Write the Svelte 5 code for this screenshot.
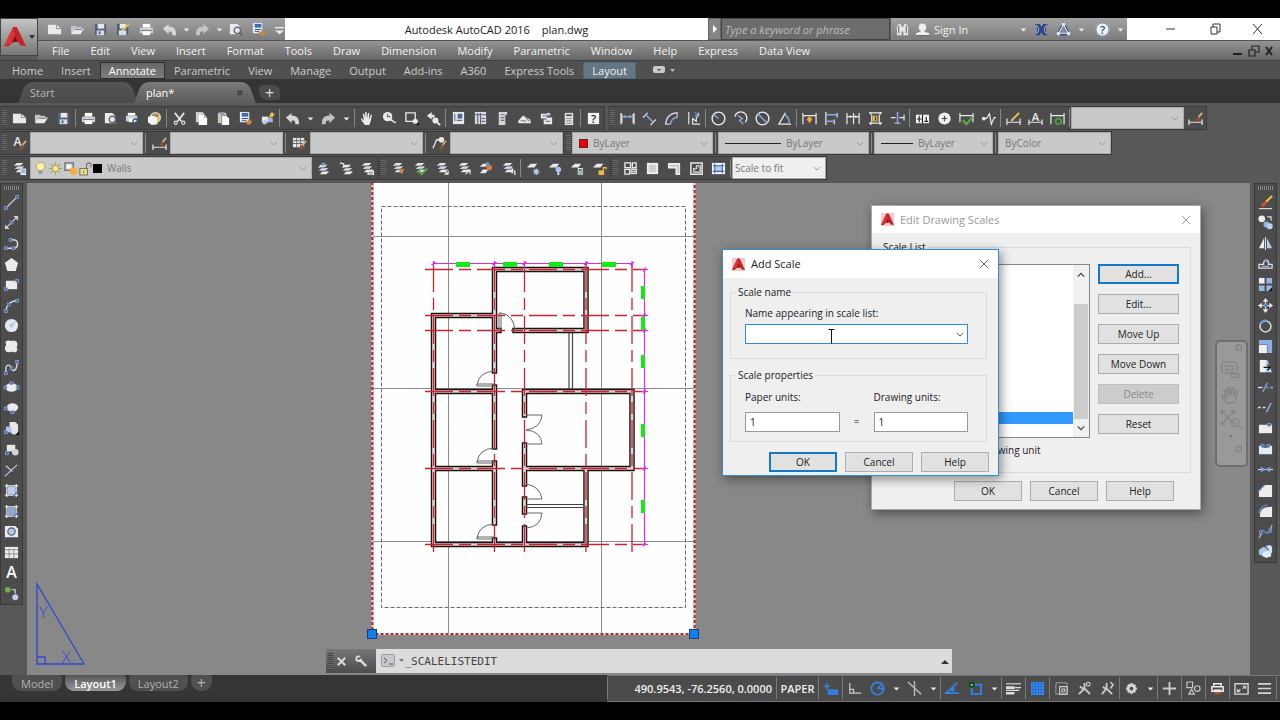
<script lang="ts">
	type Item = { icon: string; label: string; narrow?: boolean };

	const LIGHT = '#e9e9e9';
	const BLUE = '#86a8ea';

	// small helpers for the 16x16 icon set
	const line = (d: string, color = LIGHT, width = 1.3) =>
		`<path d="${d}" fill="none" stroke="${color}" stroke-width="${width}"/>`;
	const fill = (d: string, color = LIGHT) => `<path d="${d}" fill="${color}"/>`;
	const dot = (x: number, y: number, r: number, color = LIGHT) =>
		`<circle cx="${x}" cy="${y}" r="${r}" fill="${color}"/>`;
	const ring = (x: number, y: number, r: number, color = LIGHT, width = 1.5) =>
		`<circle cx="${x}" cy="${y}" r="${r}" fill="none" stroke="${color}" stroke-width="${width}"/>`;
	const node = (x: number, y: number) =>
		`<rect x="${x - 1.5}" y="${y - 1.5}" width="3" height="3" fill="#4a5f94" stroke="${BLUE}" stroke-width=".8"/>`;
	const glyph = (t: string, x: number, y: number, size: number, color = LIGHT) =>
		`<text x="${x}" y="${y}" font-size="${size}" font-weight="600" font-family="Open Sans, sans-serif" text-anchor="middle" fill="${color}">${t}</text>`;

	const sheets =
		fill('M5 2h7l-3 3H2z') + fill('M6 5.500h7l-3 3H3z', '#d5dbe4') + fill('M7 9h7l-3 3H4z') + line('M4 5.300h6M5 8.800h6', '#5c6472', 0.7);
	const sheetOne = fill('M5 3h7l-3 4H1z');
	const brush = line('M15 2l-4 5', '#d8b18c', 1.8) + fill('M11 6l2 2c-1 3-3 4-6 4 2-2 1-4 4-6z', '#8e5038');
	const pencil = line('M14 2L7 9', '#e9b949', 2.2) + fill('M5 11l1-3 2 2z', '#f3e4c0');
	const dimBase = line('M2 3v10M14 3v10');

	const icons: Record<string, string> = {
		new: fill('M1 3h9l5 4v6H1z') + line('M10 3v4h5', '#8a8a8a', 1),
		open: fill('M1 4h5l1 1h5v2H5l-3 5H1z', '#bfc4ca') + fill('M5 7h10l-4 6H1z') + line('M5 8h8', '#75818e', 1),
		save: fill('M2 2h12v12H2z', '#53617c') + fill('M5 2h7v5H5z') + fill('M4 9h8v5H4z', '#d8dde6') + fill('M6 10h2v3H6z', '#53617c'),
		saveas: fill('M1 2h12v12H1z', '#53617c') + fill('M4 2h7v5H4z') + fill('M3 9h8v5H3z', '#d8dde6') + pencil,
		print: fill('M4 2h8v4H4z', '#fff') + fill('M1 6h14v6H1z', '#cdd1d5') + fill('M4 10h8v4H4z', '#fff') + line('M2 9h12', '#6e7780', 1),
		preview: fill('M2 2h8l3 3v8H2z') + ring(10, 9, 3.4, '#5f6b7b', 1.5) + line('M12 11l3 3', '#59636f', 2),
		publish: fill('M3 2h8v3H3z', '#fff') + fill('M1 5h12v6H1z', '#cdd1d5') + fill('M4 8h7v4H4z', '#fff') + ring(11, 11, 2.5, '#3e5577', 1.5) + line('M12 13l3 2', '#3e5577', 1.8),
		globe: dot(9, 7, 6, '#d6d9c4') + fill('M5 4l4-2 0 4-3 2z', '#5fae5a') + fill('M9 2l4 2-1 3-3-1z', '#d9763e') + fill('M10 8l4-1-1 4-3 1z', '#d9c34a') + fill('M1 6l6-1 4 3v6l-6 1-4-3z', '#f2f4f6'),
		undo: fill('M1 7l6-5v3c5 0 8 1 8 9h-4c0-4-1-4-4-4v3z', '#d8d8d8'),
		redo: fill('M15 7L9 2v3c-5 0-8 1-8 9h4c0-4 1-4 4-4v3z', '#c4c4c4'),
		caret: fill('M5 7h6l-3 3z'),
		caretbar: fill('M3 9h10l-5 4z') + line('M3 6h10', LIGHT, 1.5),
		match: fill('M2 1h10v11H2z', '#e8edf5') + fill('M4 2h7v4H4z', '#3c6cb4') + line('M4 8h7M4 10h5', '#3a5682', 1) + fill('M7 11l3 0 2-3 3 4-3 3-2-1z', '#c98a3d'),
		cut: line('M3 2l7 9M13 2L6 11', LIGHT, 1.8) + ring(4, 12.500, 1.7, LIGHT, 1.2) + ring(12, 12.500, 1.7, LIGHT, 1.2),
		copy: fill('M2 1h7l2 2v9H2z', '#c9cdd2') + fill('M5 4h6l3 3v8H5z', '#fff') + line('M11 4v3h3', '#888', 0.8),
		paste: fill('M2 2h9v11H2z', '#cfc8b8') + fill('M4 1h5v3H4z', '#8d97a5') + fill('M6 5h5l3 3v7H6z', '#fff') + line('M6 15V5h5', '#777', 0.8),
		block: fill('M2 6h7v6H2z') + dot(5, 12, 2.5, '#b8c6df') + fill('M8 8l5-1 1 5H8z', '#9eb6df') + line('M10 7l4-4', '#e6b448', 2) + fill('M13 1l1 2 2 0-2 2v2l-2-2-2 1 1-3z', '#f0c85a'),
		pan: fill('M5 15c-1-2-4-5-4-7l1-0 2 2-1-7h1.500l1 5 0-7h1.500l.5 7 1-6h1.500l-.5 7 2-5h1.300c-1 5-1 7-3 11z'),
		zoomrt: dot(6, 6, 5) + line('M6 3v3h3', '#666', 1.2) + line('M9 9l3 2', LIGHT, 2) + line('M12 12h3', LIGHT, 1.5),
		zoomwin: line('M2 2h10v9H2z', LIGHT, 1.4) + dot(12, 11, 2.7) + fill('M13 15h3v-3z', '#111'),
		zoomprev: fill('M1 5l5-4v3h3v3H6v2z') + dot(10, 10, 3.2) + line('M12 12l3 3', LIGHT, 2),
		props: fill('M2 1h12v13H2z') + fill('M7 3h5v5H7z', '#3f6b9e') + line('M4 3v8M6 10h6', '#5f6f84', 1.2),
		center: fill('M2 1h12v13H2z', '#d9dde2') + line('M5 2v12M8 2v12M2 4h12M9 8h4M9 11h4', '#596676', 1.2),
		palettes: fill('M4 1h9v3h-2v11H4z', '#d3d6da') + line('M6 4h4M6 7h4M6 10h4', '#687483', 1.3),
		sheetset: fill('M1 11l5-6 8 4 1 4H2z') + line('M4 10l6 1M7 4l6 7', '#788592', 1.2),
		markup: fill('M2 3h6v5H2zM8 7h6v7H5V9h3z') + fill('M8 2h4v3H8z', '#b9c7e0') + line('M7 11h5M4 5h3', '#5e6a78', 1.1),
		calc: fill('M4 2h9v13H4z', '#e3e3e3') + line('M5.500 4.500h6', '#4f5c6c', 2) + line('M5.500 8h6M5.500 10.500h6M5.500 13h6', '#7d8896', 1),
		help: fill('M2 2h12v12H2z', '#f4f4f4') + glyph('?', 8, 12.500, 12, '#222'),
		style: glyph('A', 6, 11, 13) + `<g transform="translate(0 3)">${brush}</g>`,
		dimstyle: line('M1 9v6M15 9v6M1 12h14') + brush,
		tablestyle: fill('M1 2h12v10H1z', '#e7e7e7') + line('M1 5h12M1 8h12M5 2v10M9 2v10', '#666', 1) + `<g transform="translate(0 3)">${brush}</g>`,
		mleader: line('M1 13l4-9h4', LIGHT, 1.4) + dot(10, 4, 3) + `<g transform="translate(0 3)">${brush}</g>`,
		linear: dimBase + line('M1 2v12M15 2v12') + line('M3 6h10', BLUE, 1.5) + fill('M3 6l3-2v4zM13 6l-3-2v4z', BLUE),
		aligned: line('M1 7l5-5M9 15l6-6') + line('M4 4l8 8', BLUE, 1.5),
		arclen: line('M2 14C2 7 7 2 14 2') + line('M7 14c0-4 3-7 7-7', BLUE, 1.5) + line('M1 14h6M14 1v6', LIGHT, 1),
		ordinate: line('M3 1v13M7 14h8M7 14V8l4 3v-4l3-4', LIGHT, 1.2) + line('M9 1l5 5M14 1L9 6', BLUE, 1),
		radius: ring(8, 8, 6.8) + line('M8 8L3 4', BLUE, 1.5),
		jogged: line('M2 6a6.500 6.500 0 1 1 11 6', LIGHT, 1.5) + line('M5 5l5 3-3 2 4 4', BLUE, 1.5),
		diameter: ring(8, 8, 6.8) + line('M3 3l10 10', BLUE, 1.6),
		angular: line('M15 14H2L9 2', LIGHT, 1.4) + line('M8 4c4 2 5 5 5 9', BLUE, 1.5),
		quickdim: line('M1 2v12M15 2v12M1 5h14') + fill('M8 5l3 4-3 4-3-4z', '#f0a53a'),
		baseline: line('M2 1v14M14 2v5M11 9v5') + line('M3 4h11M3 11h9', BLUE, 1.5),
		continue: line('M1 2v12M8 2v12M14 2v12M1 6h13') + fill('M3 6l2-2v4zM12 6l-2-2v4z'),
		dimspace: line('M1 2h14M1 13h14M3 1v3M13 1v3M3 12v3M13 12v3M4 4v8M12 4v8') + fill('M5 5h5v6H5z', '#e5b23c') + line('M8 6v4', '#333', 1.2),
		dimbreak: line('M1 7h5M10 7h5M15 4v6') + line('M8 1v12M5 13h6', BLUE, 1.6),
		tolerance: fill('M1 4h14v9H1z', '#f6f6f6') + line('M8 4v9M4.500 5v7M2 8.500h5M12 6v5M10 11h4', '#222', 1.2),
		centermark: dot(8, 8, 6.5, '#efefef') + line('M8 5v6M5 8h6', '#444', 1.3),
		inspect: line('M1 2v10M15 2v10M1 5h14') + line('M4 10l4 4 6-7', '#5aa544', 2.5),
		jogline: line('M1 8h5l3-5 2 11 3-7h2') + dot(3, 8, 2),
		dimedit: line('M1 8v7M15 8v7M1 12h14') + pencil,
		dimtext: line('M1 9v6M15 9v6M1 12h14') + glyph('A', 8, 11, 12),
		dimupdate: line('M1 2v12M15 2v12M1 5h14') + ring(9, 11, 3, '#4f9a42', 2),
		layers: sheets + fill('M9 8h6v7H9z', '#dfe9f7') + line('M10 10h4M10 12h4', '#5d7ca8', 1),
		laycur: `<g transform="translate(0 2)">${sheets}</g>` + fill('M6 2h4v3H6z', '#6c9bd6'),
		layprev: `<g transform="translate(2 2)">${sheets}</g>` + line('M2 2l4 1v4', LIGHT, 1.3),
		laystate: sheets + fill('M8 10h7v5H8z', '#f5f5f5') + line('M9 12h5M9 14h5', '#555', 0.8),
		layiso: sheets + fill('M8 10l6-2-2 6z', '#d98435'),
		laymatch: sheets + line('M6 10l3 4 6-6', '#58a545', 2.2),
		layfrz: sheets + line('M14 10v4h-4M14 14l-5-4', LIGHT, 1.2),
		layoff: sheets + line('M9 14l5-4M14 14v-4h-3', LIGHT, 1.2),
		laycolor: fill('M4 3h6l-3 3H1zM4 9h6l-3 4H1z') + dot(11, 7, 3, '#df7b35') + dot(9, 3, 2, '#6a97dd'),
		laywalk: sheets + fill('M11 8h2v5h-2zM14 10h1.500v5H14z', '#e9e9e9'),
		laycold: sheetOne + line('M11 8v7M7.500 11.500h7M8.500 9l5 5M13.500 9l-5 5', '#b8d5ff', 1.2),
		laybulb: sheetOne + dot(11, 9, 3, '#a5c4ff') + fill('M10 12h2v3h-2z'),
		laylock: sheetOne + fill('M8 10h6v5H8z', '#9fb8b5') + line('M9 10V8h4v2', LIGHT, 1.2),
		layunlock: sheetOne + fill('M7 10h6v5H7z', '#e9bb42') + line('M12 10V7h3v2', '#e9bb42', 1.3),
		vports: line('M2 2h6v5H2zM2 9h5v5H2zM10 2h4v5h-4z', LIGHT, 1.4) + fill('M8 8h7v6H8z') + line('M9 10h5M9 12h5', '#555', 0.8),
		vport1: fill('M2 2h12v12H2z', '#f0f0f0') + fill('M4 4h8v8H4z', '#cfcfcf'),
		vportpoly: fill('M1 2h13v13H9V8H1z') + line('M3 5h9v8', '#aaa', 1),
		vportobj: line('M2 2h12v12H2z', LIGHT, 1.6) + line('M5 12V8h3V5h4v7z', LIGHT, 1.2) + ring(9, 9, 2.5, '#9aa4b2', 1),
		vportclip: fill('M1 2h14v12H1z', '#f0f4fa') + fill('M4 5h8v6H4z', '#b9cdeb') + line('M2 5h12M2 11h12M4 3v10M12 3v10', '#3c68a4', 1.2),
		bulb: dot(8, 6, 4.5, '#fff3a6') + ring(8, 6, 4.5, '#a89a50', 0.8) + fill('M6 10h4v4H6z', '#9b9b9b'),
		sun: dot(8, 8, 3.5, '#f6e58c') + ring(8, 8, 3.5, '#8f8648', 0.8) + line('M8 1v3M8 12v3M1 8h3M12 8h3M3 3l2 2M11 11l2 2M3 13l2-2M11 5l2-2', '#a5974d', 1),
		sunvp: line('M2 2h9v8H2z', '#6c7480', 1.4) + fill('M4 4h5v4H4z', '#fff') + dot(11, 11, 4, '#f3b13c'),
		unlock: fill('M2 8h8v7H2z', '#f2df88') + line('M2 8h8v7H2zM6 10v3M9 8V5c0-4 5-4 5 0v2', '#77716a', 1.1),
		binoc: fill('M2 5l2-3h2l1 3h2l1-3h2l2 3v9H9v-4H7v4H2z', '#e8e8e8') + line('M4 4v8M12 4v8', '#555', 1),
		person: dot(8, 5.500, 4, '#efefef') + fill('M6 8h4v2l5 2v2H1v-2l5-2z', '#efefef') + line('M1 14.500h14', '#555', 0.8),
		exchange: fill('M1 2h5l2 3 2-3h5c-3 3-3 9 0 12h-5l-2-3-2 3H1c3-3 3-9 0-12z', '#2c4787') + line('M2 3c4 3 4 7 0 10M14 3c-4 3-4 7 0 10', '#b9c8e8', 1),
		a360: line('M8 2L2 13h12z', '#34528e', 2.8) + line('M8 3L3 12h10z', '#e7eefb', 1.2) + dot(8, 2.500, 2, '#dfe7f6') + dot(2.500, 12.500, 2, '#dfe7f6') + dot(13.500, 12.500, 2, '#dfe7f6'),
		question: dot(8, 8, 7.5, '#eef2fa') + ring(8, 8, 7, '#4a5f92', 0.8) + glyph('?', 8, 12.500, 12, '#20438c'),
		line: line('M2 14L14 2', '#dcdcdc', 1.3) + node(2, 14) + node(14, 2),
		xline: line('M2 14L14 2', '#cfcfcf', 1.3) + fill('M1 15v-5l5 5zM15 1v5l-5-5z', '#cfcfcf') + node(8, 8),
		pline: line('M1 13h9c6 0 6-9 0-9H7', '#dcdcdc', 1.6) + node(2, 13) + node(7, 4) + node(10, 13),
		polygon: fill('M8 1l7 5-2.500 9h-9L1 6z', '#ececec'),
		rect: fill('M2 4h12v9H2z', '#ececec') + node(14, 4) + node(2, 13),
		arc: line('M2 14C2 9 6 3 14 3', '#dcdcdc', 1.5) + node(2, 14) + node(5, 7) + node(14, 3),
		circle: dot(8, 8, 7, '#e4e8f0') + ring(8, 8, 1.5, BLUE, 1) + line('M9 7l3-3', BLUE, 1),
		cloud: fill('M3 2c2-1 3 0 5 0s5-1 6 2-1 4 0 6-1 5-4 4-3 0-5 0-4-1-4-4 2-3 1-5 0-3 1-3z', '#ececec'),
		spline: line('M2 14C1 2 7 5 8 9s6 3 6-7', '#dcdcdc', 1.5) + node(2, 14) + node(14, 2) + node(8, 9),
		ellipse: `<ellipse cx="8" cy="8" rx="6.500" ry="4.500" fill="#ececec"/>` + node(1.5, 8) + node(14.5, 8) + node(8, 3.5),
		ellarc: `<ellipse cx="9" cy="7" rx="6" ry="4.500" fill="#ececec"/>` + node(2, 8) + node(9, 12),
		insert: fill('M6 1h6l3 3v8H6z') + dot(11, 11, 3.5, '#dfe5f0') + fill('M2 6h6v6H2z', '#b7c5e2') + node(2, 12) + fill('M12 15h4v-4z', '#111'),
		make: fill('M3 3h9v7H3z') + dot(12, 11, 3.5, '#d6d6d6') + node(3, 12),
		point: line('M1 14L14 2M2 3l7 6', '#c4c8d0', 1.3) + line('M4 11l6-5', BLUE, 1),
		hatch: fill('M4 4h8v8H4z', '#a9c2ec') + line('M4 8l4-4M4 12l8-8M8 12l4-4', '#e9effa', 1) + line('M3 1v14M13 1v14M1 3h14M1 13h14', LIGHT, 1.3) + line('M10 14l5-5', '#4f78cc', 1.3),
		gradient: fill('M4 4h8v8H4z', '#8ca8da') + line('M3 1v14M13 1v14M1 3h14M1 13h14', LIGHT, 1.3) + line('M10 14l5-5', '#4f78cc', 1.3),
		region: fill('M1 2h11l3 3v9H1z', '#ececec') + ring(8, 8, 3.8, '#4e648c', 1.5) + dot(8, 8, 3, '#b7c8e6'),
		table: fill('M1 2h14v12H1z', '#ececec') + line('M1 5h14M1 9.500h14M5.500 4v10M10.500 4v10', '#8b8b8b', 1),
		text: glyph('A', 8, 14, 17, '#fff'),
		addsel: dot(4, 4, 3, '#6fb046') + dot(12, 12, 3.2, '#b9d0f4') + line('M8 4h4v4', '#ddd', 1.2),
		erase: line('M15 1L8 8', '#efc04a', 2.4) + line('M9 7l-5 5', '#c4532c', 3.4) + line('M1 14.500h14', '#ddd', 1.2),
		copyobj: dot(4, 4, 3.6, '#ececec') + dot(9, 10, 3.2, '#8fb2e8') + dot(12.500, 12, 3.2, '#b7cff5') + line('M10 2h4v4', '#ddd', 1.2),
		mirror: fill('M6.500 2v11H1z', '#ececec') + fill('M9.500 2v11H15z', '#b9cdea') + line('M8 1v14', '#eee', 1),
		offset: line('M1 13h14V9h-4c2-6-6-6-5 0H1z', '#dcdcdc', 1.4) + line('M4 11h8M6.500 7c0-3 4-3 3.500 0', BLUE, 1.3),
		array: fill('M1 1h6v6H1z', '#efefef') + fill('M9 1h6v6H9zM1 9h6v6H1zM9 9h6v6H9z', '#94b6e8') + fill('M11 15h4v-4z', '#111'),
		move: fill('M8 0l3 4H5zM8 16l3-4H5zM0 8l4-3v6zM16 8l-4-3v6z', '#ececec') + line('M8 3v10M3 8h10', '#ddd', 1.2) + node(8, 8),
		rotate: ring(8, 9, 5.8, '#dcdcdc', 1.6) + line('M2 7c1-3 4-5 8-4', '#6e92dc', 2),
		scale: fill('M1 1h14v14H9V7H1z', '#8cafe5') + fill('M1 6h9v9H1z', '#f0f0f0') + line('M1 6h9v9', '#667', 0.8),
		stretch: fill('M2 1h8l5 13H2z', '#b8cdf0') + fill('M2 1h6v13H2z', '#f0f0f0') + line('M6 9h7M10 6l3 3-3 3', '#111', 1.3),
		trim: line('M0 8h5', '#ddd', 1.4) + line('M5 13L10 3', '#86a8ea', 1.4) + line('M9 8h2M13 8h3', '#86a8ea', 1.4),
		extend: line('M0 8h3M5 8h3', '#ddd', 1.4) + line('M9 13l5-10', '#86a8ea', 1.6),
		breakpt: fill('M1 4h14v9H1z', '#ececec') + node(12, 4),
		breakobj: fill('M1 4h4v2h6V4h4v9H1z', '#e4ebf6') + node(5, 4) + node(11, 4),
		join: line('M0 8h16', '#ddd', 1.2) + fill('M3 5l5 3-5 3zM13 5L8 8l5 3z', '#7ea3e6'),
		chamfer: fill('M1 15V9l6-7h8v13z', '#ececec') + line('M0 9l7-7', '#5f84ca', 1.4),
		fillet: fill('M2 15c0-8 3-11 13-11v11z', '#ececec') + line('M1 11c1-6 4-8 9-9', '#5f84ca', 1.5),
		blend: line('M1 15l3-5M15 1l-2 5', '#bbb', 1.3) + line('M3 8c3-5 5 6 10 0', '#5f84ca', 1.6) + node(3, 9) + node(13, 7),
		explode: fill('M1 6l5-3 4 2v5l-5 3-4-2z', '#a9c6ee') + fill('M8 2l5-1 2 2v6l-4 2V5z', '#cfdff5') + fill('M5 9l5-2 4 2v4l-5 2-4-2z', '#e3ebf8'),
		dyninput: fill('M5 9h11v6H5z', '#2f7fe0') + line('M4 2v7M.5 5.500h7', '#3c87e3', 1.4),
		ortho: line('M3 2v11h12M3 9h4v4', '#c9c9c9', 1.3),
		polar: ring(8, 8, 6.5, '#2f85ea', 1.8) + line('M8 8h8M8 8l4-4', '#2f85ea', 1.5),
		isodraft: line('M1 1l14 13M8 0v16', '#b9b9b9', 1.5),
		otrack: line('M15 13H1L13 2', '#2f85ea', 1.8) + fill('M6 7h4v4H6z', '#2f85ea'),
		osnap: line('M4 4h10v10H4z', '#2f85ea', 2) + dot(4, 4, 3.2, '#0e4a1e') + dot(4, 4, 1.2, '#7fd38a'),
		lwt: line('M0 3h16', '#ddd', 1.2) + line('M0 7h9M0 13h9', '#ddd', 2.8) + line('M9 7h7M0 10h14', '#ddd', 1.2),
		transp: fill('M1 1h14v14H1z', '#3b8ff0') + line('M1 3h14M1 6h14M1 9h14M1 12h14M3 1v14M6 1v14M9 1v14M12 1v14', '#2166bd', 0.8),
		selcyc: `<rect x="2" y="2" width="12" height="12" fill="none" stroke="#ccc" stroke-dasharray="2 1"/>` + line('M6 6h8v8H6zM8.500 8.500h3v3h-3z', '#ccc', 1.2),
		annovis: line('M8 2v6l-6 6M8 8l6 6M3 6l5 3', '#c9c9c9', 2) + ring(12, 3.500, 2, '#c9c9c9', 1.2),
		annoauto: line('M7 2v6l-5 6M7 8l6 6M3 6l4 3', '#c9c9c9', 2) + line('M11 1l3 3-3 4', '#c9c9c9', 1.6),
		gear: ring(8, 8, 3.5, '#d3d3d3', 3) + line('M8 2v3M8 11v3M2 8h3M11 8h3M4 4l2 2M10 10l2 2M4 12l2-2M10 6l2-2', '#d3d3d3', 2),
		plus: line('M8 1v14M1 8h14', '#c9c9c9', 2),
		isolate: line('M1 1h6v6H1zM3 14l3-5 3 5z', '#c9c9c9', 1.2) + ring(12, 8, 3, '#c9c9c9', 1.2),
		printer: line('M4 5V3h8v2M2 6h12v5H2z', '#eee', 1.6) + fill('M4 9h8v2H4z', '#eee') + line('M5 13h6', '#d2502e', 2),
		clean: line('M1 3h14v11H1z', '#d3d3d3', 1.5) + fill('M9 5h4v4zM3 12h4l-4-4z', '#d3d3d3') + line('M11 7L9 8M5 10l2-1', '#d3d3d3', 1.4),
		menu: line('M1 3h14M1 8h14M1 13h14', '#d3d3d3', 1.8)
	};

	const toItems = (names: string): Item[] =>
		names.split(' ').map((n) => ({ icon: n, label: n, narrow: n === 'caret' || n === 'caretbar' }));

	const quickAccess = toItems('new open save saveas print undo caret redo caret preview match caretbar');
	const standardBar = [
		'new open save',
		'print preview publish globe',
		'cut copy paste match block',
		'undo caret redo caret',
		'pan zoomrt zoomwin zoomprev',
		'props center palettes sheetset markup calc',
		'help'
	].map(toItems);
	const dimensionBar = [
		'linear aligned arclen ordinate',
		'radius jogged diameter angular',
		'quickdim baseline continue dimspace dimbreak',
		'tolerance centermark inspect jogline',
		'dimedit dimtext dimupdate'
	].map(toItems);
	const layerBar = toItems('laycur layprev laystate');
	const layerTools = ['layiso laymatch layfrz layoff laycolor laywalk', 'laycold laybulb laylock layunlock'].map(toItems);
	const viewportBar = toItems('vports vport1 vportpoly vportobj vportclip');
	const drawBar = toItems(
		'line xline pline polygon rect arc circle cloud spline ellipse ellarc insert make point hatch gradient region table text addsel'
	);
	const modifyBar = toItems(
		'erase copyobj mirror offset array move rotate scale stretch trim extend breakpt breakobj join chamfer fillet blend explode'
	);
	const statusBar = [
		'dyninput',
		'ortho polar caret isodraft caret',
		'otrack osnap caret',
		'lwt',
		'transp',
		'selcyc annovis annoauto',
		'gear caret',
		'plus',
		'isolate',
		'printer',
		'clean menu'
	].map(toItems);

	const menus = ['File', 'Edit', 'View', 'Insert', 'Format', 'Tools', 'Draw', 'Dimension', 'Modify', 'Parametric', 'Window', 'Help', 'Express', 'Data View'];
	const ribbonTabs = ['Home', 'Insert', 'Annotate', 'Parametric', 'View', 'Manage', 'Output', 'Add-ins', 'A360', 'Express Tools', 'Layout'];
	const styleBoxes = ['style', 'dimstyle', 'tablestyle', 'mleader'];
	const listActions = ['Add...', 'Edit...', 'Move Up', 'Move Down', 'Delete', 'Reset'];

	let activeRibbon = $state('Annotate');
	let activeLayout = $state('Layout1');
	let scaleName = $state('');
	let paperUnits = $state('1');
	let drawingUnits = $state('1');
	let command = $state('_SCALELISTEDIT');

	// floor plan geometry, in drawing coordinates
	const gridX = [433.5, 494.5, 524.5, 586, 632];
	const gridY = [269.5, 315.5, 330.5, 391.5, 468.5, 544.5];
	const walls =
		'M494.500 371V269.500H586V330.500H515M494.500 330.500H499M494.500 315.500H433.500V544.500H586V468.500' +
		'M433.500 391.500H494.500M433.500 468.500H494.500M494.500 387V447M494.500 463V523M494.500 540V544' +
		'M524.500 415V391.500H632V468.500H524.500M524.500 445V484M524.500 499V512M524.500 528V544';
	const doors =
		'M499 330V313h2v17M501 313q13 2 14 18M494 384H477v2h17M477 385q2 -13 17 -14M494 461H477v2h17M477 462q2 -13 17 -14' +
		'M494 537H477v2h17M477 538q2 -13 17 -14M526 415h16q-1 13 -16 15q15 1 16 14H526M526 484q14 2 16 15H526M526 513h16q-1 14 -16 15';
	const tagsX = [456, 503, 549, 602];
	const tagsY = [286, 317, 355, 424, 500];
</script>

{#snippet icon(name: string)}
	<svg class="icon" viewBox="0 0 16 16" aria-hidden="true">{@html icons[name]}</svg>
{/snippet}

{#snippet tools(items: Item[])}
	{#each items as item}
		<button class="tool" class:narrow={item.narrow} aria-label={item.label}>{@render icon(item.icon)}</button>
	{/each}
{/snippet}

{#snippet chevron()}
	<svg class="chevron" viewBox="0 0 10 6" aria-hidden="true"><path d="M1 1l4 4 4-4" /></svg>
{/snippet}

{#snippet logo()}
	<svg class="logo" viewBox="0 0 24 24" aria-hidden="true">
		<path d="M0 22L10 1h4l10 21-6-1-3-4-6 1-4 4z" fill="#c3242b" />
		<path d="M10 1l2 9-4 8-8 4z" fill="#dd3337" />
		<path d="M12 11l3 6-6 1z" fill="#7f1318" />
	</svg>
{/snippet}

<div class="screen">
	<header>
		<button class="app-button" aria-label="Application menu">
			{@render logo()}
			<svg class="app-caret" viewBox="0 0 6 4" aria-hidden="true"><path d="M0 0h6L3 4z" /></svg>
		</button>
		<div class="bars">
			<div class="titlebar">
				<div class="quick">{@render tools(quickAccess)}</div>
				<div class="title"><span>Autodesk AutoCAD 2016</span><span>plan.dwg</span></div>
				<button class="search-toggle" aria-label="Search options">
					<svg viewBox="0 0 6 8" aria-hidden="true"><path d="M1 0l4 4-4 4z" fill="#fff" /></svg>
				</button>
				<input class="search" type="text" aria-label="Search" placeholder="Type a keyword or phrase" />
				<div class="account">
					<button class="tool" aria-label="Find">{@render icon('binoc')}</button>
					<button class="sign-in">{@render icon('person')}Sign In</button>
					{@render tools(toItems('caret exchange a360 caret'))}
					<span class="rule"></span>
					{@render tools(toItems('question caret'))}
				</div>
				<div class="window-buttons">
					<button aria-label="Minimize"><svg viewBox="0 0 12 12"><path d="M1 6h9" /></svg></button>
					<button aria-label="Restore"><svg viewBox="0 0 12 12"><path d="M2 4h6v7H2zM4 4V1h7v8H8" /></svg></button>
					<button aria-label="Close"><svg viewBox="0 0 12 12"><path d="M1 1l9 10M10 1L1 11" /></svg></button>
				</div>
			</div>
			<nav class="menubar" aria-label="Menu">
				{#each menus as menu}
					<button>{menu}</button>
				{/each}
				<div class="doc-buttons">
					<svg viewBox="0 0 44 12" aria-hidden="true">
						<path d="M1 9h9" stroke-width="2" />
						<path d="M17 5h6v6h-6zM20 5V1h7v6h-4" stroke-width="1.200" />
						<path d="M34 2l6 8M40 2l-6 8" stroke-width="2" />
					</svg>
				</div>
			</nav>
		</div>
	</header>

	<nav class="ribbon" aria-label="Ribbon">
		{#each ribbonTabs as tab}
			<button class:active={tab === activeRibbon} class:context={tab === 'Layout'} onclick={() => (activeRibbon = tab)}>
				{tab}
			</button>
		{/each}
		<svg class="ribbon-toggle" viewBox="0 0 24 10" aria-hidden="true">
			<rect x="1" y="1" width="12" height="7" rx="2" fill="#c9c9c9" />
			<path d="M5 4h4l-2 2z" fill="#444" />
			<path d="M18 4h5l-2.500 3z" fill="#b5b5b5" />
		</svg>
	</nav>

	<div class="file-tabs">
		<button class="file-tab">Start</button>
		<button class="file-tab current">plan*<span class="close">✖</span></button>
		<button class="add-tab" aria-label="New tab">+</button>
	</div>

	<div class="toolbars">
		<div class="row spaced">
			<div class="toolbar">
				<span class="grip"></span>
				{#each standardBar as group, i}
					{#if i}<span class="rule"></span>{/if}
					{@render tools(group)}
				{/each}
			</div>
			<div class="toolbar">
				<span class="grip"></span>
				{#each dimensionBar as group}
					{@render tools(group)}
					<span class="rule"></span>
				{/each}
				<div class="combo w-style"><select aria-label="Dimension style" disabled></select>{@render chevron()}</div>
				{@render tools(toItems('dimstyle'))}
			</div>
		</div>

		<div class="row">
			<div class="toolbar">
				<span class="grip"></span>
				{#each styleBoxes as name, i}
					{#if i}<span class="rule wide"></span>{/if}
					<button class="tool" aria-label={name}>{@render icon(name)}</button>
					<div class="combo w-style"><select aria-label={name} disabled></select>{@render chevron()}</div>
				{/each}
			</div>
			<div class="toolbar">
				<span class="grip"></span>
				<div class="combo w-color">
					<span class="swatch red"></span>
					<select aria-label="Color" disabled><option>ByLayer</option></select>{@render chevron()}
				</div>
				<span class="rule wide"></span>
				<div class="combo w-linetype">
					<span class="stroke long"></span>
					<select aria-label="Linetype" disabled><option>ByLayer</option></select>{@render chevron()}
				</div>
				<span class="rule wide"></span>
				<div class="combo w-weight">
					<span class="stroke"></span>
					<select aria-label="Lineweight" disabled><option>ByLayer</option></select>{@render chevron()}
				</div>
				<span class="rule wide"></span>
				<div class="combo w-style">
					<select aria-label="Plot style" disabled><option>ByColor</option></select>{@render chevron()}
				</div>
			</div>
		</div>

		<div class="row">
			<div class="toolbar">
				<span class="grip"></span>
				{@render tools(toItems('layers'))}
				<div class="combo w-layer">
					{#each ['bulb', 'sun', 'sunvp', 'unlock'] as name}{@render icon(name)}{/each}
					<span class="swatch"></span>
					<select aria-label="Layer" disabled><option>Walls</option></select>{@render chevron()}
				</div>
				{@render tools(layerBar)}
			</div>
			<div class="toolbar">
				<span class="grip"></span>
				{#each layerTools as group, i}
					{#if i}<span class="rule"></span>{/if}
					{@render tools(group)}
				{/each}
			</div>
			<div class="toolbar">
				<span class="grip"></span>
				{@render tools(viewportBar)}
				<span class="rule"></span>
				<div class="combo w-scale">
					<select aria-label="Viewport scale"><option>Scale to fit</option></select>{@render chevron()}
				</div>
			</div>
		</div>
	</div>

	<main>
		<div class="side"><div class="palette draw"><span class="grip-h"></span>{@render tools(drawBar)}</div></div>

		<div class="canvas">
			<svg class="paper" viewBox="365 183 336 460" aria-label="Floor plan">
				<rect x="372" y="180" width="322.500" height="454" fill="#fefefe" />
				<path d="M448.500 183V633M601.500 183V633M372 236.500H694M372 388.500H694M372 541.500H694" fill="none" stroke="#8a8a94" />
				<path d="M372.500 180V634H694.500V180" fill="none" stroke="#b3282c" stroke-width="2" />
				<path d="M372.500 180V634H694.500V180" fill="none" stroke="#f6eaea" stroke-width="2" stroke-dasharray="2 3" />
				<rect x="381.500" y="206.500" width="304" height="401" fill="none" stroke="#6b6b6b" stroke-dasharray="4 2" />
				<path d={walls} fill="none" stroke="#161616" stroke-width="5.500" stroke-linecap="square" />
				<path d={walls} fill="none" stroke="#ecd2d2" stroke-width="2.700" stroke-linecap="square" />
				<path d="M569 333V389M572.500 333V389M526 504.500H584M526 507.500H584" fill="none" stroke="#444" stroke-width="1.200" />
				<g fill="none" stroke="#cb2230" stroke-width="1.300" stroke-dasharray="28 6 12 6">
					{#each gridY as y}<path d="M425 {y}H646" />{/each}
					{#each gridX as x}<path d="M{x} 264V552" />{/each}
				</g>
				<path d={doors} fill="none" stroke="#666" />
				<g fill="none" stroke="#d82ee0" stroke-width="1.200">
					<path d="M433 263.500H632M644.500 269V545" />
					{#each gridX as x}<path d="M{x} 261v7M{x - 2} 265l4-3" />{/each}
					{#each gridY as y}<path d="M641 {y}h7M643 {y + 2}l3-4" />{/each}
				</g>
				<g fill="#12ec12">
					{#each tagsX as x}<rect {x} y="262" width="14" height="5" />{/each}
					{#each tagsY as y}<rect x="641" {y} width="4" height="13" />{/each}
				</g>
				<g fill="#0c80ee" stroke="#154375">
					<rect x="367.500" y="629.500" width="9" height="9" />
					<rect x="689.500" y="629.500" width="9" height="9" />
				</g>
			</svg>

			<svg class="ucs" viewBox="0 0 50 84" aria-label="UCS icon">
				<path d="M1 2V82H48zM1 75H9V82" fill="none" stroke="#2f48d0" stroke-width="1.300" />
				<text x="3" y="36">Y</text>
				<text x="26" y="81">X</text>
			</svg>

			<div class="navbar">
				<svg viewBox="0 0 32 126" aria-hidden="true">
					<g fill="none" stroke="#858585" stroke-width="1.500">
						<circle cx="24" cy="6" r="3" />
						<path d="M22 34H9q-4 0-4-4v-4q0-4 4-4h8q5 0 5 4v6M10 26h7v5h-7zM16 35h8v4h-8z" />
						<path d="M10 67c-1-3-5-6-5-8l2 0 3 3-2-9 2 0 2 6 0-9h2l1 9 2-8h2l-1 9 3-6h2l-4 13z" />
						<path d="M5 76l15 15M19 76L5 91M5 80v-4h4M15 76h4v4M5 87v4h4" />
						<circle cx="20" cy="89" r="4" />
						<path d="M23 92l4 4" />
						<circle cx="24" cy="118" r="3" />
					</g>
					<path d="M13 103h5l-2.500 3z" fill="#777" />
				</svg>
			</div>

			<section class="dialog edit-scales" aria-label="Edit Drawing Scales">
				<div class="dialog-title">
					{@render logo()}<h2>Edit Drawing Scales</h2>
					<button class="close-button" aria-label="Close"><svg viewBox="0 0 12 12"><path d="M1 1l10 10M11 1L1 11" /></svg></button>
				</div>
				<fieldset>
					<legend>Scale List</legend>
					<div class="list-row">
						<div class="listbox">
							<div class="list-items"><div class="selected"></div></div>
							<div class="scrollbar">
								<svg viewBox="0 0 10 6"><path d="M1 5l4-4 4 4" /></svg>
								<div class="thumb"></div>
								<svg viewBox="0 0 10 6"><path d="M1 1l4 4 4-4" /></svg>
							</div>
						</div>
						<div class="actions">
							{#each listActions as action, i}
								<button class="push" class:default={i === 0} disabled={action === 'Delete'}>{action}</button>
							{/each}
						</div>
					</div>
					<p class="ratio">1 paper unit = 1 drawing unit</p>
				</fieldset>
				<div class="dialog-buttons">
					<button class="push">OK</button>
					<button class="push">Cancel</button>
					<button class="push">Help</button>
				</div>
			</section>

			<section class="dialog add-scale" aria-label="Add Scale">
				<div class="dialog-title">
					{@render logo()}<h2>Add Scale</h2>
					<button class="close-button" aria-label="Close"><svg viewBox="0 0 12 12"><path d="M1 1l10 10M11 1L1 11" /></svg></button>
				</div>
				<fieldset>
					<legend>Scale name</legend>
					<label for="scale-name">Name appearing in scale list:</label>
					<div class="name-box">
						<input id="scale-name" type="text" bind:value={scaleName} />
						{@render chevron()}
						<svg class="ibeam" viewBox="0 0 7 15" aria-hidden="true"><path d="M.5 .5h6M3.500 .5v14" /></svg>
					</div>
				</fieldset>
				<fieldset>
					<legend>Scale properties</legend>
					<div class="units">
						<div class="unit">
							<label for="paper-units">Paper units:</label>
							<input id="paper-units" type="text" bind:value={paperUnits} />
						</div>
						<span class="equals">=</span>
						<div class="unit">
							<label for="drawing-units">Drawing units:</label>
							<input id="drawing-units" type="text" bind:value={drawingUnits} />
						</div>
					</div>
				</fieldset>
				<div class="dialog-buttons">
					<button class="push default">OK</button>
					<button class="push">Cancel</button>
					<button class="push">Help</button>
				</div>
			</section>

			<div class="command">
				<div class="command-tools">
					<span class="grip"></span>
					<button aria-label="Close"><svg viewBox="0 0 16 16"><path d="M4 4l8 8M12 4l-8 8" stroke="#ddd" stroke-width="2" /></svg></button>
					<button aria-label="Customize">
						<svg viewBox="0 0 16 16"><path d="M6 6l7 7" stroke="#ddd" stroke-width="2.500" /><circle cx="5" cy="5" r="2.500" fill="none" stroke="#ddd" stroke-width="2" stroke-dasharray="12 4" /></svg>
					</button>
				</div>
				<svg class="prompt" viewBox="0 0 24 14" aria-hidden="true">
					<rect x=".5" y=".5" width="13" height="12" rx="1" fill="#c5c8cf" stroke="#9a9da5" />
					<path d="M3 4l3 2.500L3 9M8 10h4" fill="none" stroke="#555" />
					<path d="M18 5h5l-2.500 3z" fill="#777" />
				</svg>
				<input type="text" aria-label="Command" bind:value={command} />
				<button class="history" aria-label="Command history"><svg viewBox="0 0 8 5"><path d="M0 5l4-4 4 4z" fill="#333" /></svg></button>
			</div>
		</div>

		<div class="side right"><div class="palette modify"><span class="grip-h"></span>{@render tools(modifyBar)}</div></div>
	</main>

	<footer>
		<div class="layout-tabs">
			{#each ['Model', 'Layout1', 'Layout2'] as tab}
				<button class="layout-tab" class:active={tab === activeLayout} onclick={() => (activeLayout = tab)}>{tab}</button>
			{/each}
			<button class="layout-tab add" aria-label="New layout">+</button>
		</div>
		<div class="status">
			<span class="coords">490.9543, -76.2560, 0.0000</span>
			<button class="space">PAPER</button>
			{#each statusBar as group}
				<div class="status-group">{@render tools(group)}</div>
			{/each}
		</div>
	</footer>
</div>

<style>
	:global(body) {
		margin: 0;
		background: #000;
	}
	.screen {
		box-sizing: border-box;
		min-height: 100vh;
		padding: 18px 0;
		display: flex;
		flex-direction: column;
		overflow: hidden;
		background: #000;
		color: #ddd;
		font-family: 'Open Sans', 'Noto Sans', sans-serif;
		font-size: 11px;
		line-height: 15px;
	}
	.screen :global(*) {
		box-sizing: border-box;
	}
	button,
	input,
	select {
		margin: 0;
		padding: 0;
		border: 0;
		border-radius: 0;
		background: none;
		color: inherit;
		font: inherit;
		outline: none;
	}
	svg {
		display: block;
		flex: none;
	}
	.icon {
		width: 15px;
		height: 15px;
		overflow: visible;
	}
	.tool {
		flex: none;
		display: flex;
		align-items: center;
		justify-content: center;
		width: 22px;
	}
	.tool.narrow {
		width: 14px;
	}

	/* title and menu */
	header {
		display: flex;
		background: linear-gradient(#999, #6a6a6a 60%, #555);
	}
	.app-button {
		display: flex;
		align-items: center;
		justify-content: center;
		gap: 3px;
		width: 38px;
		height: 38px;
		border: 1px solid #444;
		background: linear-gradient(#c4c4c4, #777);
	}
	.app-button .logo {
		width: 22px;
		height: 24px;
	}
	.app-caret {
		width: 6px;
		height: 4px;
		fill: #333;
	}
	.bars {
		flex: 1;
		min-width: 0;
	}
	.titlebar {
		display: flex;
		height: 23px;
		background: #fff;
		border-bottom: 1px solid #555;
	}
	.quick,
	.account {
		display: flex;
		align-items: center;
		background: linear-gradient(#a2a2a2, #7c7c7c);
	}
	.quick {
		width: 247px;
		padding-left: 5px;
	}
	.quick .tool {
		width: 23px;
	}
	.quick .narrow {
		width: 10px;
	}
	.quick .narrow:last-child {
		width: 18px;
	}
	.title {
		flex: 1;
		display: flex;
		align-items: center;
		justify-content: center;
		gap: 12px;
		color: #222;
		white-space: nowrap;
	}
	.search-toggle {
		display: flex;
		align-items: center;
		justify-content: center;
		width: 13px;
		background: #858585;
		border: 1px solid #666;
	}
	.search-toggle svg {
		width: 6px;
		height: 8px;
	}
	.search {
		width: 169px;
		padding-left: 3px;
		background: #6d6d6d;
		border: 1px solid #444;
		font-style: italic;
	}
	.search::placeholder {
		color: #bbb;
		opacity: 1;
	}
	.account {
		width: 237px;
		border-left: 1px solid #666;
	}
	.sign-in {
		flex: 1;
		display: flex;
		align-items: center;
		gap: 4px;
		padding-left: 2px;
		color: #f0f0f0;
	}
	.account .rule {
		background: #777;
	}
	.window-buttons {
		display: flex;
		width: 153px;
		padding-left: 22px;
	}
	.window-buttons button {
		flex: 1;
		display: flex;
		align-items: center;
		justify-content: center;
	}
	.window-buttons svg {
		width: 12px;
		height: 12px;
		fill: none;
		stroke: #333;
	}
	.menubar {
		display: flex;
		align-items: center;
		gap: 21px;
		height: 19px;
		padding: 0 4px 0 14px;
		background: linear-gradient(#949494, #666);
		color: #f2f2f2;
		white-space: nowrap;
	}
	.doc-buttons {
		margin-left: auto;
	}
	.doc-buttons svg {
		width: 44px;
		height: 12px;
		fill: none;
		stroke: #222;
	}
	.ribbon {
		display: flex;
		align-items: center;
		height: 19px;
		padding-left: 3px;
		background: #505050;
		border-top: 1px solid #404040;
		white-space: nowrap;
	}
	.ribbon button {
		height: 17px;
		padding: 0 8px;
		border: 1px solid transparent;
		color: #ccc;
	}
	.ribbon button.active {
		background: linear-gradient(#666, #7d7d7d);
		border-color: #303030;
		color: #fff;
	}
	.ribbon button.context {
		background: #667683;
		border-color: #4f6678;
		color: #f0f0f0;
	}
	.ribbon-toggle {
		width: 24px;
		height: 10px;
		margin-left: 16px;
	}

	/* document tabs */
	.file-tabs {
		display: flex;
		align-items: flex-end;
		height: 24px;
		padding-left: 20px;
		background: #353535;
	}
	.file-tab {
		position: relative;
		isolation: isolate;
		display: flex;
		align-items: center;
		justify-content: space-between;
		height: 21px;
		width: 116px;
		padding: 0 10px;
		color: #b5b5b5;
	}
	.file-tab::before,
	.file-tab::after {
		content: '';
		position: absolute;
		z-index: -1;
		inset: 0 50% 0 2px;
		background: linear-gradient(#555, #4b4b4b);
		border-radius: 7px 0 0 0;
		transform: skewX(-20deg);
	}
	.file-tab::after {
		inset: 0 2px 0 40%;
		border-radius: 0 7px 0 0;
		transform: skewX(20deg);
	}
	.file-tab.current {
		width: 118px;
		color: #fff;
	}
	.file-tab.current::before,
	.file-tab.current::after {
		background: linear-gradient(#7a7a7a, #5c5c5c);
	}
	.close {
		color: #444;
		font-size: 9px;
	}
	.add-tab {
		width: 21px;
		height: 15px;
		margin: 0 0 3px 5px;
		background: #4b4b4b;
		border-radius: 3px 7px 3px 9px;
		color: #ddd;
		font-size: 16px;
		line-height: 14px;
	}

	/* toolbars */
	.toolbars {
		display: flex;
		flex-direction: column;
		gap: 1px;
		padding: 3px 0;
		background: #585858;
	}
	.row {
		display: flex;
	}
	.row.spaced {
		gap: 3px;
	}
	.toolbar {
		display: flex;
		height: 24px;
		background: #4c4c4c;
		border: 1px solid #3a3a3a;
		border-left: 0;
	}
	.grip {
		flex: none;
		width: 5px;
		margin: 3px 1px 3px 2px;
		background: repeating-linear-gradient(#6b6b6b 0 1px, #444 1px 2px);
	}
	.rule {
		flex: none;
		width: 1px;
		margin: 2px 1px;
		background: #888;
	}
	.rule.wide {
		margin: 1px 2px;
	}
	.combo {
		position: relative;
		display: flex;
		align-items: center;
		gap: 5px;
		padding-left: 6px;
		background: #c9c9c9;
		border: 1px solid #aaa;
		color: #777;
		font-size: 10px;
	}
	.combo select {
		flex: 1;
		min-width: 0;
		height: 100%;
		appearance: none;
		opacity: 1;
	}
	.chevron {
		position: absolute;
		right: 4px;
		top: 8px;
		width: 8px;
		height: 5px;
		fill: none;
		stroke: #999;
		stroke-width: 1.2;
		pointer-events: none;
	}
	.w-style {
		width: 113px;
	}
	.w-color {
		width: 141px;
	}
	.w-linetype {
		width: 151px;
	}
	.w-weight {
		width: 119px;
	}
	.w-layer {
		width: 282px;
		padding-left: 2px;
		gap: 0;
	}
	.w-layer select {
		margin-left: 5px;
	}
	.w-scale {
		width: 94px;
		padding-left: 2px;
		background: #efefef;
	}
	.swatch {
		width: 9px;
		height: 9px;
		background: #000;
	}
	.swatch.red {
		background: #f00000;
		border: 1px solid #622;
	}
	.stroke {
		width: 32px;
		height: 1px;
		background: #222;
	}
	.stroke.long {
		width: 56px;
	}

	/* workspace */
	main {
		flex: 1;
		display: flex;
		min-height: 0;
		background: #585858;
	}
	.side {
		flex: none;
		width: 27px;
	}
	.side.right {
		width: 30px;
		padding-left: 4px;
	}
	.palette {
		display: flex;
		flex-direction: column;
		width: 23px;
		background: #4c4c4c;
		border: 1px solid #3a3a3a;
	}
	.palette .tool {
		flex: 1;
		width: 21px;
	}
	.draw {
		height: 422px;
	}
	.modify {
		height: 380px;
	}
	.grip-h {
		height: 4px;
		margin: 2px 3px;
		background: repeating-linear-gradient(90deg, #888 0 1px, #444 1px 2px);
	}
	.canvas {
		position: relative;
		flex: 1;
		min-width: 0;
		background: #888;
		overflow: hidden;
	}
	.paper {
		position: absolute;
		left: 338px;
		top: 0;
		width: 336px;
		height: 460px;
	}
	.ucs {
		position: absolute;
		left: 9px;
		bottom: 9px;
		width: 50px;
		height: 84px;
	}
	.ucs text {
		fill: #2f48d0;
		font: 300 16px 'Open Sans', sans-serif;
	}
	.navbar {
		position: absolute;
		right: 2px;
		top: 157px;
		width: 33px;
		height: 127px;
		background: #999;
		border: 2px solid #6e6e6e;
		border-radius: 5px;
	}

	/* dialogs */
	.dialog {
		position: absolute;
		display: flex;
		flex-direction: column;
		background: #efefef;
		box-shadow: 2px 3px 10px rgba(0, 0, 0, 0.45);
		color: #222;
		font-size: 10px;
		line-height: 14px;
	}
	.edit-scales {
		left: 844px;
		top: 22px;
		width: 330px;
		height: 305px;
		border: 1px solid #aaa;
	}
	.add-scale {
		left: 695px;
		top: 66px;
		width: 277px;
		height: 227px;
		border: 1px solid #2f8fd0;
	}
	.dialog-title {
		flex: none;
		display: flex;
		align-items: center;
		gap: 6px;
		height: 28px;
		padding: 0 9px;
		background: #fff;
	}
	.dialog-title .logo {
		width: 13px;
		height: 13px;
		background: #f3c9c9;
	}
	h2 {
		flex: 1;
		margin: 0;
		font-size: 11px;
		font-weight: 400;
	}
	.edit-scales h2 {
		color: #999;
	}
	.close-button svg {
		width: 10px;
		height: 10px;
		fill: none;
		stroke: #444;
	}
	.edit-scales .dialog-title {
		height: 27px;
	}
	.edit-scales .close-button svg {
		stroke: #888;
	}
	fieldset {
		min-width: 0;
		margin: 7px 11px 0 7px;
		padding: 0 18px 0 14px;
		border: 1px solid #dcdcdc;
	}
	.add-scale fieldset {
		height: 74px;
	}
	.add-scale fieldset + fieldset {
		margin-top: 9px;
	}
	legend {
		margin-left: -9px;
		padding: 0 2px;
	}
	label {
		display: block;
	}
	.name-box {
		position: relative;
		margin-top: 4px;
	}
	.add-scale fieldset label {
		margin-top: 7px;
	}
	.add-scale input {
		display: block;
		width: 100%;
		height: 20px;
		padding: 0 4px;
		background: #fff;
		border: 1px solid #999;
	}
	.add-scale .name-box input {
		border-color: #2f8fd0;
	}
	.name-box .chevron {
		stroke: #555;
	}
	.ibeam {
		position: absolute;
		left: 83px;
		top: 5px;
		width: 7px;
		height: 15px;
		fill: none;
		stroke: #111;
	}
	.units {
		display: flex;
		align-items: flex-end;
	}
	.unit {
		flex: 1;
	}
	.add-scale .unit label {
		margin: 8px 0;
	}
	.equals {
		width: 34px;
		line-height: 22px;
		text-align: center;
	}
	.push {
		width: 68px;
		height: 20px;
		background: #e1e1e1;
		border: 1px solid #adadad;
		text-align: center;
	}
	.push.default {
		border: 2px solid #1579c8;
	}
	.push:disabled {
		background: #ccc;
		border-color: #bfbfbf;
		color: #888;
	}
	.dialog-buttons {
		display: flex;
		justify-content: flex-end;
		gap: 8px;
		padding: 10px 9px 0 0;
	}
	.edit-scales fieldset {
		height: 233px;
		margin: 7px 9px 0 9px;
		padding: 0 11px 0 8px;
	}
	.edit-scales .dialog-buttons {
		padding: 8px 26px 0 0;
	}
	.list-row {
		display: flex;
		gap: 8px;
		margin-top: 10px;
	}
	.listbox {
		flex: 1;
		display: flex;
		height: 174px;
		background: #fff;
		border: 1px solid #828790;
	}
	.list-items {
		flex: 1;
		display: flex;
		flex-direction: column;
		justify-content: flex-end;
		padding-bottom: 13px;
	}
	.selected {
		height: 12px;
		background: #3399ff;
	}
	.scrollbar {
		display: flex;
		flex-direction: column;
		align-items: center;
		justify-content: space-between;
		width: 16px;
		padding: 7px 0 6px;
		background: #f0f0f0;
	}
	.scrollbar svg {
		width: 8px;
		height: 6px;
		fill: none;
		stroke: #444;
		stroke-width: 1.5;
	}
	.thumb {
		width: 14px;
		height: 115px;
		margin: auto 0 6px;
		background: #cdcdcd;
	}
	.actions {
		display: flex;
		flex-direction: column;
		gap: 10px;
	}
	.actions .push {
		width: 81px;
	}
	.ratio {
		margin: 5px 0 0 16px;
	}

	/* command line */
	.command {
		position: absolute;
		left: 50%;
		bottom: 2px;
		display: flex;
		align-items: center;
		width: 626px;
		height: 24px;
		margin-left: -313px;
		background: #dcdcdc;
		color: #444;
	}
	.command-tools {
		display: flex;
		align-items: center;
		align-self: stretch;
		width: 50px;
		background: linear-gradient(#777, #4c4c4c);
	}
	.command-tools .grip {
		align-self: stretch;
	}
	.command-tools button {
		width: 20px;
	}
	.command-tools svg {
		width: 15px;
		height: 15px;
	}
	.prompt {
		width: 24px;
		height: 14px;
		margin-left: 5px;
	}
	.command input {
		flex: 1;
		font-family: 'DejaVu Sans Mono', monospace;
		font-size: 11px;
	}
	.history {
		padding: 0 3px;
	}
	.history svg {
		width: 8px;
		height: 5px;
	}

	/* layout tabs and status bar */
	footer {
		display: flex;
		justify-content: space-between;
		height: 27px;
		background: #353535;
		white-space: nowrap;
	}
	.layout-tabs {
		display: flex;
		align-items: flex-start;
		gap: 3px;
		padding-left: 12px;
	}
	.layout-tab {
		height: 16px;
		padding: 0 9px;
		background: #505050;
		border-radius: 3px 3px 9px 9px;
		color: #b0b0b0;
	}
	.layout-tab.active {
		background: linear-gradient(#555, #999);
		color: #fff;
		font-weight: 600;
	}
	.layout-tab.add {
		padding: 0 6px;
		font-size: 16px;
		line-height: 14px;
	}
	.status {
		display: flex;
		align-items: stretch;
		padding: 1px 3px 2px 0;
		background: #4b4b4b;
		border-top: 1px solid #777;
		border-bottom: 1px solid #777;
	}
	.coords,
	.space,
	.status-group {
		display: flex;
		align-items: center;
		border-right: 1px solid #7a7a7a;
	}
	.coords {
		justify-content: flex-end;
		width: 170px;
		padding-right: 4px;
		border-left: 1px solid #7a7a7a;
		color: #f0f0f0;
		font-weight: 600;
	}
	.space {
		width: 42px;
		justify-content: center;
		color: #f0f0f0;
		font-weight: 600;
	}
	.status-group .tool {
		width: 23px;
	}
	.status-group .narrow {
		width: 14px;
	}
</style>
